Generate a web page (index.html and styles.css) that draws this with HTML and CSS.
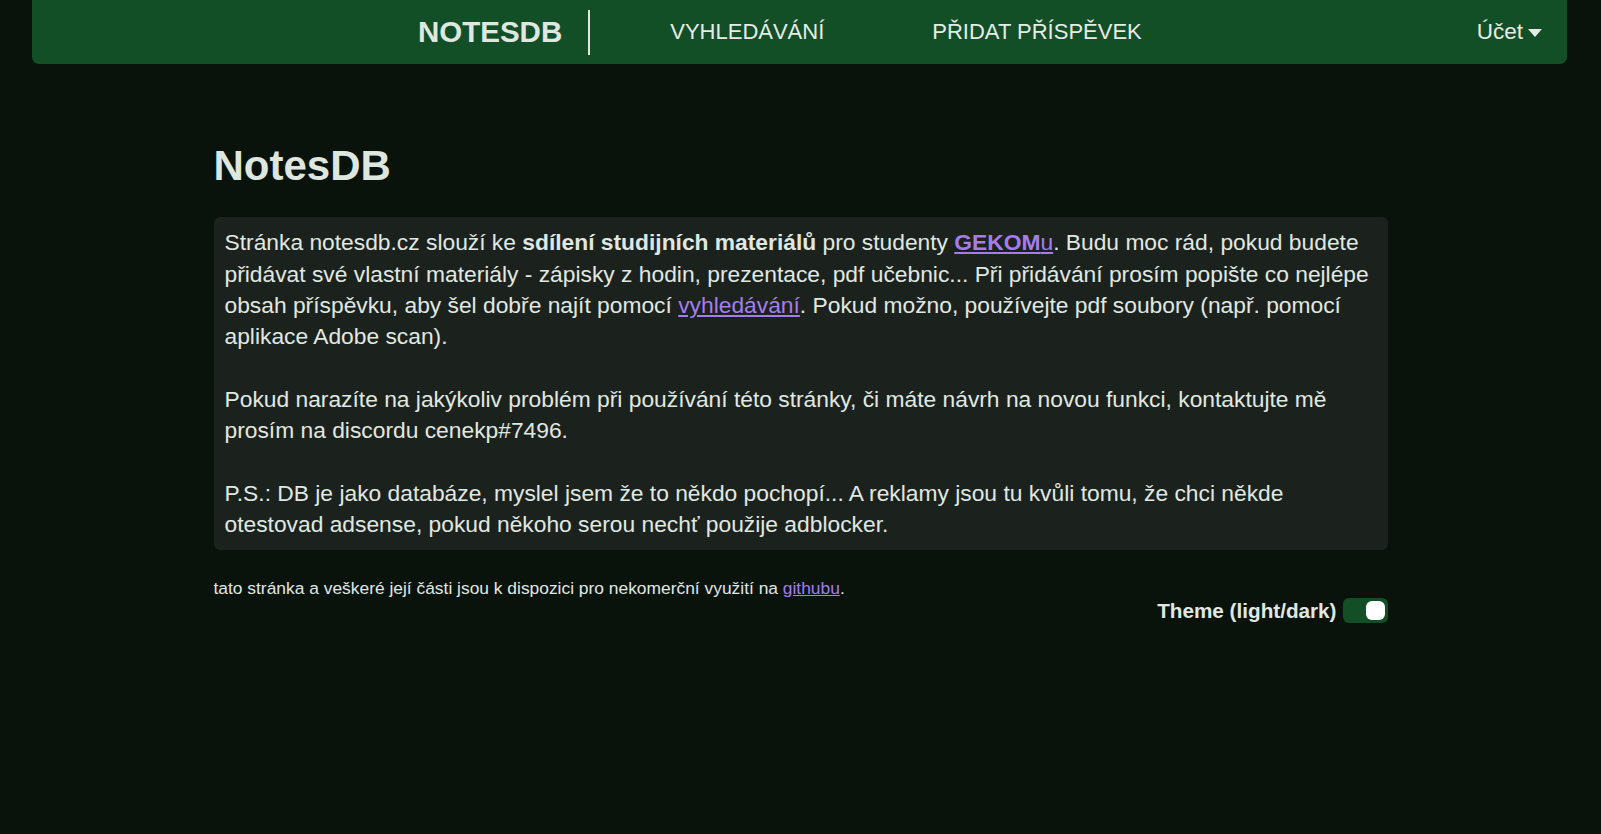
FILE: index.html
```html
<!DOCTYPE html>
<html lang="cs">
<head>
<meta charset="utf-8">
<title>NotesDB</title>
<link rel="stylesheet" href="styles.css">
</head>
<body>
<nav class="navbar">
  <a class="brand" href="#">NOTESDB</a>
  <span class="divider"></span>
  <a class="nav-link first" href="#">VYHLEDÁVÁNÍ</a>
  <a class="nav-link second" href="#">PŘIDAT PŘÍSPĚVEK</a>
  <a class="account" href="#">Účet <span class="caret"></span></a>
</nav>
<main class="container">
  <h1 class="title">NotesDB</h1>
  <div class="card">
    Stránka notesdb.cz slouží ke <b>sdílení studijních materiálů</b> pro studenty <a href="#" class="link"><b>GEKOM</b>u</a>. Budu moc rád, pokud budete přidávat své vlastní materiály - zápisky z hodin, prezentace, pdf učebnic... Při přidávání prosím popište co nejlépe obsah příspěvku, aby šel dobře najít pomocí <a href="#" class="link">vyhledávání</a>. Pokud možno, používejte pdf soubory (např. pomocí aplikace Adobe scan).<br><br>
    Pokud narazíte na jakýkoliv problém při používání této stránky, či máte návrh na novou funkci, kontaktujte mě prosím na discordu cenekp#7496.<br><br>
    P.S.: DB je jako databáze, myslel jsem že to někdo pochopí... A reklamy jsou tu kvůli tomu, že chci někde otestovad adsense, pokud někoho serou nechť použije adblocker.
  </div>
  <p class="footer">tato stránka a veškeré její části jsou k dispozici pro nekomerční využití na <a href="#" class="link">githubu</a>.</p>
  <div class="theme-row">
    <span class="theme-label">Theme (light/dark)</span>
    <span class="toggle"><span class="knob"></span></span>
  </div>
</main>
</body>
</html>
```
FILE: styles.css
```css
* { box-sizing: border-box; }
html, body {
  margin: 0;
  padding: 0;
  background: #0a120c;
  color: #e0e8e2;
  font-family: "Liberation Sans", Arial, sans-serif;
}
a { text-decoration: none; color: inherit; }

.navbar {
  margin: 0 34px 0 32px;
  height: 64px;
  background: #124f27;
  border-radius: 0 0 7px 7px;
  display: flex;
  align-items: center;
  padding-left: 386px;
  padding-right: 25px;
}
.brand {
  font-weight: bold;
  font-size: 29.5px;
  color: #dfe7e0;
}
.divider {
  width: 2px;
  height: 45px;
  background: #dfe7e0;
  margin-left: 26px;
}
.nav-link {
  font-size: 22px;
  color: #e6ece7;
}
.nav-link.first { margin-left: 80px; }
.nav-link.second { margin-left: 108px; }
.account {
  margin-left: auto;
  font-size: 22.5px;
  color: #e6ece7;
  display: flex;
  align-items: center;
  gap: 5px;
}
.caret {
  width: 0;
  height: 0;
  border-left: 7px solid transparent;
  border-right: 7px solid transparent;
  border-top: 8px solid #e6ece7;
  margin-top: 2px;
}

.container {
  width: 1174px;
  margin: 0 auto;
  padding-top: 77px;
}
.title {
  margin: 0 0 26px 0;
  font-size: 42px;
  line-height: 1.2;
  font-weight: bold;
  color: #dde6df;
}
.card {
  background: #1b221d;
  border-radius: 6px;
  padding: 10px 9px 10px 11px;
  font-size: 22.8px;
  line-height: 31.3px;
}
.card b { font-weight: bold; }
.link {
  color: #a57cf0;
  text-decoration: underline;
}
.footer {
  margin: 26px 0 0 0;
  font-size: 17.4px;
  line-height: 24px;
}
.theme-row {
  display: flex;
  justify-content: flex-end;
  align-items: center;
  gap: 6px;
  margin-top: -2px;
}
.theme-label {
  font-weight: bold;
  font-size: 20.7px;
}
.toggle {
  width: 45px;
  height: 25px;
  background: #124f27;
  border-radius: 6px;
  display: flex;
  align-items: center;
  justify-content: flex-end;
  padding-right: 3px;
}
.knob {
  width: 19px;
  height: 19px;
  background: #ffffff;
  border-radius: 6px;
}
```
